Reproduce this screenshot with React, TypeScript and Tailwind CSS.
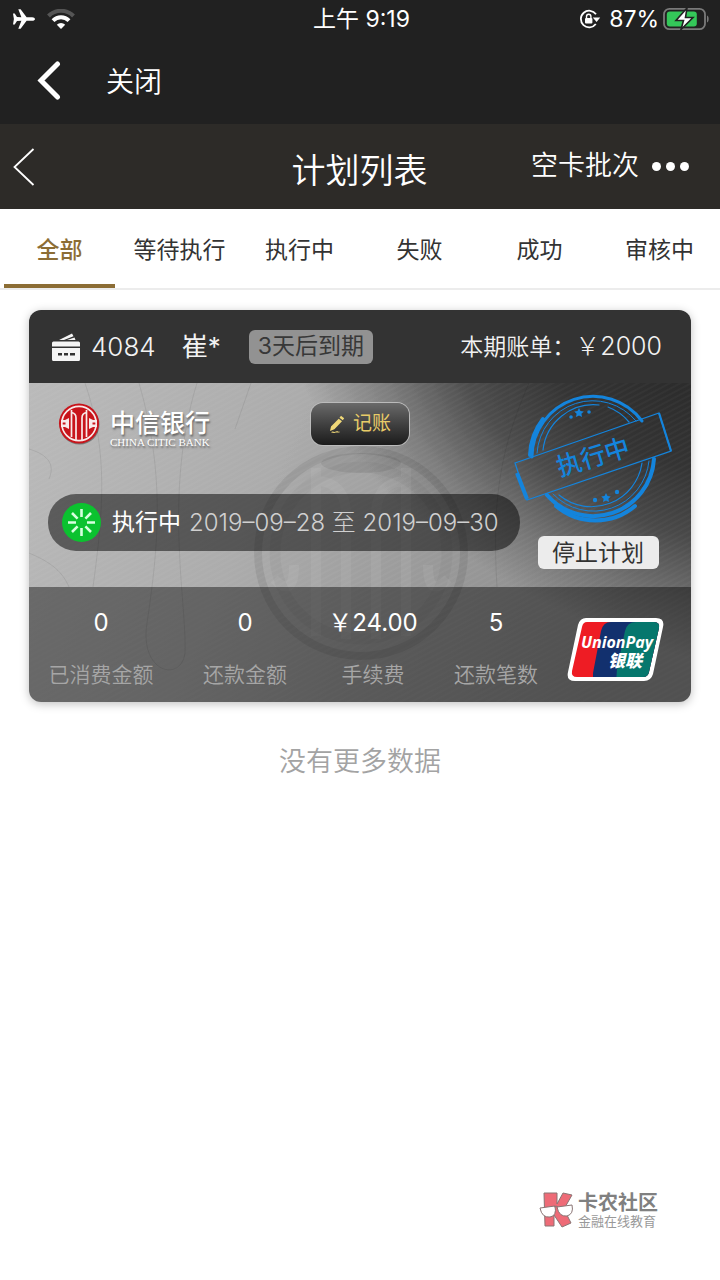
import { useState } from "react";
import clsx from "clsx";

const TABS = ["全部", "等待执行", "执行中", "失败", "成功", "审核中"];

const STATS = [
  { label: "已消费金额", value: "0" },
  { label: "还款金额", value: "0" },
  { label: "手续费", value: "￥24.00" },
  { label: "还款笔数", value: "5" },
];

function StatusBar() {
  return (
    <div className="grid h-[38px] grid-cols-3 items-center bg-[#212121] pr-[9px] pl-3 text-[23px] text-white">
      <div className="flex items-center gap-3">
        <svg className="h-5 w-[23px]" viewBox="0 0 23 20" fill="#fff">
          <path d="M1 4.600h1.700L5 8l4.400.3L6.300.3h2.300L14.600 8.200h5.600c1.500 0 2.800.9 2.800 1.800s-1.300 1.800-2.800 1.800h-5.600L8.600 19.700H6.300l3.100-8L5 12l-2.300 3.400H1l.9-5.400z" />
        </svg>
        <svg className="h-5 w-7" viewBox="0 0 28 20" fill="none" strokeWidth="4">
          <path d="M1.500 7a17.500 17.500 0 0 1 25 0" stroke="#555" />
          <path d="M6 11.600a11.500 11.500 0 0 1 16 0" stroke="#fff" />
          <path d="M14 20l-4.200-4.300a6 6 0 0 1 8.400 0z" fill="#fff" />
        </svg>
      </div>
      <div className="text-center">上午 9:19</div>
      <div className="flex items-center justify-end">
        <svg className="mr-2 h-5 w-[22px] shrink-0" viewBox="0 0 22 20">
          <path d="M17 5.300A8.300 8.300 0 1 0 16.800 15" fill="none" stroke="#fff" strokeWidth="1.800" />
          <path d="M13.800 8.600h7.400L17.600 13z" fill="#fff" />
          <rect x="6" y="9" width="7.400" height="5.600" rx="1" fill="#fff" />
          <path d="M7.500 9V7.500a2.200 2.200 0 0 1 4.400 0V9" fill="none" stroke="#fff" strokeWidth="1.400" />
        </svg>
        <span>87%</span>
        <svg className="ml-1 h-6 w-12 shrink-0" viewBox="0 0 48 24">
          <rect x="1" y="1.800" width="41" height="20.400" rx="5.500" fill="none" stroke="#7a7a7a" strokeWidth="1.800" />
          <path d="M44 8.500c2.200.7 2.200 6.300 0 7z" fill="#7a7a7a" />
          <rect x="3.800" y="4.500" width="30" height="15" rx="3" fill="#34c759" />
          <path d="M24 1L13 13.500h7.500L18 22.500l12-12h-7.500z" fill="#fff" stroke="#212121" strokeWidth="1.600" />
        </svg>
      </div>
    </div>
  );
}

function CiticMark() {
  return (
    <svg className="size-[42px] shrink-0" viewBox="0 0 42 42">
      <circle cx="21.500" cy="21.500" r="20" fill="#000" opacity=".35" />
      <circle cx="21" cy="20.500" r="20" fill="#c8141b" />
      <g fill="none" stroke="#f8eaea" strokeWidth="1.700">
        <circle cx="21" cy="20.500" r="17.200" />
        <path d="M13.500 7v27M13.500 9.500c3.500.5 4.500 3 4.500 5.500v22M28.500 7v27M28.500 9.500c-3.500.5-4.500 3-4.500 5.500v22" />
      </g>
      <path d="M3 17h4l4-2v11l-4-2H3v-2.500h4.500v-2H3zM39 17h-4l-4-2v11l4-2h4v-2.500h-4.500v-2H39z" fill="#f8eaea" />
    </svg>
  );
}

function Stamp() {
  return (
    <svg className="h-[132px] w-[150px] overflow-visible" viewBox="0 0 150 132" fill="none" stroke="#1484dc">
      <g strokeLinecap="round">
        <path d="M9 66A61 61 0 0 1 119 30" strokeWidth="3" />
        <path d="M7 64A63 63 0 0 1 20 28" strokeWidth="4" />
        <path d="M20 59A51 51 0 0 1 76 14M85 16A51 51 0 0 1 106 31" strokeWidth="1.200" />
        <path d="M14 62A56 56 0 0 1 113 30" strokeWidth="1" />
        <path d="M131 68A61 61 0 0 1 24 104" strokeWidth="4" />
        <path d="M112 115A61 61 0 0 1 33 115" strokeWidth="4" />
        <path d="M119 72A51 51 0 0 1 36 104" strokeWidth="1.200" />
        <path d="M126 70A56 56 0 0 1 30 103" strokeWidth="1" />
      </g>
      <path d="M-8 72L136 22l12 38L4 109z" strokeWidth="1.300" />
      <path d="M-6 82L4 108" strokeWidth="4" />
      <path d="M136 22l12 38" strokeWidth="2.200" />
      <g fill="#1484dc" stroke="none">
        <path d="M56 17l1.500 3 3.300.4-2.400 2.300.6 3.300-3-1.600-3 1.600.6-3.300-2.400-2.300 3.300-.4z" />
        <circle cx="48" cy="26" r="1.800" />
        <circle cx="66" cy="21" r="1.800" />
        <path d="M83 102l1.500 3 3.300.4-2.400 2.300.6 3.300-3-1.600-3 1.600.6-3.300-2.400-2.300 3.300-.4z" />
        <circle cx="72" cy="109" r="2.200" />
        <circle cx="94" cy="101" r="2.200" />
        <text x="70" y="75" fontSize="25" fontWeight="500" textAnchor="middle" transform="rotate(-17 70 66)">
          执行中
        </text>
      </g>
    </svg>
  );
}

function UnionPay() {
  return (
    <svg className="h-[66px] w-[98px]" viewBox="0 0 98 66">
      <defs>
        <clipPath id="up">
          <path d="M20 5h67q6 0 5 6l-10 44q-1 5-6 5H10q-6 0-5-6l10-44q1-5 5-5z" />
        </clipPath>
      </defs>
      <path d="M19 1h70q9 0 7 9L86 57q-2 7-9 7H8q-9 0-7-9L11 8q2-7 8-7z" fill="#fff" />
      <g clipPath="url(#up)">
        <rect width="98" height="66" fill="#ee1c24" />
        <path d="M44 0h54v66H26V56l8-42Q36 5 44 5z" fill="#12306e" />
        <path d="M69 0h29v66H49l1-14 8-38q2-9 11-9z" fill="#06776d" />
      </g>
      <g fill="#fff" fontStyle="italic" fontWeight="700">
        <text x="14" y="31" fontSize="16" fontFamily="Open Sans, sans-serif">UnionPay</text>
        <text x="41" y="50" fontSize="17" fontWeight="900">银联</text>
      </g>
    </svg>
  );
}

// brushed metal with the bank emblem, behind card body and totals
function CardArt() {
  return (
    <svg className="absolute inset-0 -z-10 size-full" viewBox="0 0 662 319" preserveAspectRatio="none">
      <defs>
        <linearGradient id="metal" x1="0" y1="0" x2="1" y2="0.200">
          <stop offset="0" stopColor="#bababa" />
          <stop offset=".4" stopColor="#acacac" />
          <stop offset=".7" stopColor="#999" />
          <stop offset="1" stopColor="#8c8c8c" />
        </linearGradient>
        <radialGradient
          id="dark"
          gradientUnits="userSpaceOnUse"
          cx="0"
          cy="0"
          r="1"
          gradientTransform="translate(645 0) rotate(25) scale(430 255)"
        >
          <stop offset="0" stopColor="#2c2c2c" />
          <stop offset=".3" stopColor="#2c2c2c" stopOpacity=".92" />
          <stop offset=".55" stopColor="#2c2c2c" stopOpacity=".7" />
          <stop offset=".8" stopColor="#2c2c2c" stopOpacity=".28" />
          <stop offset="1" stopColor="#2c2c2c" stopOpacity="0" />
        </radialGradient>
        <pattern id="brush" width="7" height="5" patternUnits="userSpaceOnUse" patternTransform="rotate(-28)">
          <path d="M0 1h7" stroke="#fff" strokeWidth="1" opacity=".05" />
        </pattern>
      </defs>
      <rect width="662" height="319" fill="url(#metal)" />
      <rect width="662" height="319" fill="url(#dark)" />
      <g fill="none" stroke="#000" opacity=".08">
        <path d="M56 0c24 70 18 130 8 204M110 0c26 90 20 160 8 240c-8 50 34 60 38 30c2-50-22-160 12-270M222 0l-16 46M0 66c20 6 26 16 20 30M0 170c24 10 34 20 40 34" />
        <path d="M500 0c-26 60-38 110-32 204" />
      </g>
      <g fill="none" stroke="#000">
        <circle cx="332" cy="170" r="103" strokeWidth="8" opacity=".08" />
        <circle cx="332" cy="170" r="86" strokeWidth="11" opacity=".03" />
      </g>
      <g fill="none" stroke="#fff" strokeWidth="10" opacity=".06">
        <path d="M287 85v168M287 98c20 0 30 12 30 34v124M377 85v168M377 98c-20 0-30 12-30 34v124" />
        <path d="M245 196c14 14 20 8 20-14M419 196c-14 14-20 8-20-14" />
      </g>
      <ellipse cx="332" cy="80" rx="40" ry="10" fill="#000" opacity=".07" />
      <rect width="662" height="319" fill="url(#brush)" />
    </svg>
  );
}

function PlanCard() {
  return (
    <article className="mx-[29px] mt-5 overflow-hidden rounded-xl shadow-[0_2px_10px_rgba(0,0,0,0.25)]">
      <header className="flex h-[73px] items-center bg-[#333] pr-[29px] pl-[23px] text-[#f2f2f2]">
        <svg className="mr-[11px] h-7 w-7" viewBox="0 0 28 28" fill="#f5f5f5">
          <path d="M7 7l13-6.500 1.500 2.800L12 7zM15 7l7.500-2.600L23.500 7z" />
          <path d="M1.500 8.500h25Q28 8.500 28 10v3.500H0V10q0-1.500 1.500-1.500z" />
          <path
            fillRule="evenodd"
            d="M0 15h28v11.500q0 1.500-1.500 1.500h-25Q0 28 0 26.500zm6 5v2.500h4V20zm6 0v2.500h4V20zm6 0v2.500h5V20z"
          />
        </svg>
        <span className="mr-[26px] text-[26px] font-light">4084</span>
        <span className="mr-7 text-[26px]">崔*</span>
        <span className="flex h-[34px] items-center rounded-md bg-[#929292] px-[9px] text-[23px] text-[#383838]">
          3天后到期
        </span>
        <span className="ml-auto text-[23px] font-[350]">
          本期账单：<span className="text-[25px] font-light">￥2000</span>
        </span>
      </header>

      <div className="relative isolate">
        <CardArt />
        <div className="flex h-[204px] gap-[3px] pr-[18px] pl-[19px]">
          <div className="flex-1 pt-5">
            <div className="flex h-[42px] items-center pl-[10px]">
              <CiticMark />
              <div className="ml-[10px] pt-2 text-white [text-shadow:1px_2px_2px_#666]">
                <div className="text-[25px] leading-7 font-medium">中信银行</div>
                <div className="font-['Liberation_Serif',serif] text-[11px] leading-[11px]">CHINA CITIC BANK</div>
              </div>
              <button className="mr-[111px] ml-auto flex h-[42px] w-[98px] items-center justify-center gap-2 rounded-xl bg-linear-to-b from-[#6a6a6a] to-[#1c1c1c] text-[19px] text-[#e8cc68] shadow-[0_0_0_1px_#bbb]">
                <svg className="h-[18px] w-4" viewBox="0 0 16 18" fill="#f0d878">
                  <path d="M12 .8l3.200 2.400-1.400 2-3.300-2.400zM9.700 3.800l3.300 2.400-7.600 8L1 16l1-4.500zM2 17.200c2-1.600 3 .6 5-.6s2 .4 3.500 0v.8c-2 .6-2.500-.4-3.800.2s-3 .2-4.700-.4z" />
                </svg>
                记账
              </button>
            </div>
            <div className="mt-[49px] flex h-[57px] items-center rounded-[28px] bg-black/50 pl-[14px]">
              <svg className="size-[39px]" viewBox="0 0 39 39">
                <circle cx="19.500" cy="19.500" r="19.500" fill="#0bc22f" />
                <path
                  d="M19.500 6v8M19.500 25v8M6 19.500h8M25 19.500h8M10 10l5.600 5.600M23.400 23.400L29 29M29 10l-5.600 5.600M15.600 23.400L10 29"
                  stroke="#d8ffdf"
                  strokeWidth="2.600"
                />
              </svg>
              <span className="mr-2 ml-[11px] text-[23px] text-white">执行中</span>
              <span className="text-[24px] font-light text-[#d0d0d0]">2019–09–28 至 2019–09–30</span>
            </div>
          </div>
          <div className="flex w-[150px] flex-col items-center pt-2">
            <Stamp />
            <button className="mt-[13px] h-[33px] w-[121px] rounded-md bg-[#ececec] text-[23px] leading-8 text-[#333]">
              停止计划
            </button>
          </div>
        </div>

        <div className="grid h-[115px] grid-cols-[144fr_144fr_112fr_134fr_128fr] bg-black/42 pt-4">
          {STATS.map((s) => (
            <div key={s.label} className="flex flex-col items-center">
              <div className="text-[24px] leading-10 text-white">{s.value}</div>
              <div className="mt-3 text-[21px] leading-10 font-[350] text-[#a6a6a6]">{s.label}</div>
            </div>
          ))}
          <div className="pt-[14px] pl-1">
            <UnionPay />
          </div>
        </div>
      </div>
    </article>
  );
}

export default function App() {
  const [tab, setTab] = useState(0);

  return (
    <div className="flex min-h-screen flex-col bg-white font-['Inter','Noto_Sans_CJK_SC',sans-serif]">
      <StatusBar />
      <nav className="flex h-[86px] items-center bg-[#212121] pl-[37px] text-white">
        <button aria-label="返回">
          <svg className="h-10 w-6" viewBox="0 0 24 40" fill="none" stroke="#fff" strokeWidth="5" strokeLinecap="round">
            <path d="M20.500 3L4 19.500 20.500 36" />
          </svg>
        </button>
        <button className="ml-[45px] pt-[2px] text-[28px] font-[350]">关闭</button>
      </nav>

      <header className="grid h-[85px] grid-cols-[1fr_auto_1fr] items-center bg-[#2d2b28] pr-[31px] pl-3 text-white">
        <button aria-label="上一页">
          <svg className="h-10 w-6" viewBox="0 0 24 40" fill="none" stroke="#fff" strokeWidth="1.800">
            <path d="M21.500 2L2.500 20l19 18" />
          </svg>
        </button>
        <h1 className="pt-2 pl-[18px] text-[34px] font-[350]">计划列表</h1>
        <div className="flex items-center justify-end gap-[13px]">
          <button className="text-[27px] font-[350]">空卡批次</button>
          <button aria-label="更多" className="flex gap-[5px]">
            <i className="size-[9px] rounded-full bg-white" />
            <i className="size-[9px] rounded-full bg-white" />
            <i className="size-[9px] rounded-full bg-white" />
          </button>
        </div>
      </header>

      <div className="grid h-[81px] grid-cols-6 border-b-2 border-[#ececec]">
        {TABS.map((t, i) => (
          <button
            key={t}
            onClick={() => setTab(i)}
            className={clsx(
              "mr-[5px] ml-1 border-b-4 pt-2 text-[23px]",
              i === tab ? "border-[#8c6d35] font-medium text-[#8c6d35]" : "border-transparent text-[#333]",
            )}
          >
            {t}
          </button>
        ))}
      </div>

      <main className="flex-1">
        <PlanCard />
        <p className="mt-10 text-center text-[27px] font-[350] text-[#a3a3a3]">没有更多数据</p>
      </main>

      <footer className="flex items-center justify-end gap-[3px] pr-[62px] pb-[51px]">
        <svg className="h-[38px] w-9" viewBox="0 0 36 38" stroke="#8a7474" strokeWidth="1">
          <path d="M5 2h13v11l6-11 9 2-8 14 7 14-9 4-8-12v11H6z" fill="#ee6b77" />
          <path d="M1 17l15-2q2 10-5 11-8 1-10-9zM18 16l15-2q2 9-5 11-8 1-10-9z" fill="#fff" />
          <path d="M15 16q2-2 4 0" fill="none" />
        </svg>
        <div className="text-[#808080]">
          <div className="text-[20px] leading-[22px] font-bold">卡农社区</div>
          <div className="text-[13px] leading-[14px] text-[#999]">金融在线教育</div>
        </div>
      </footer>
    </div>
  );
}
